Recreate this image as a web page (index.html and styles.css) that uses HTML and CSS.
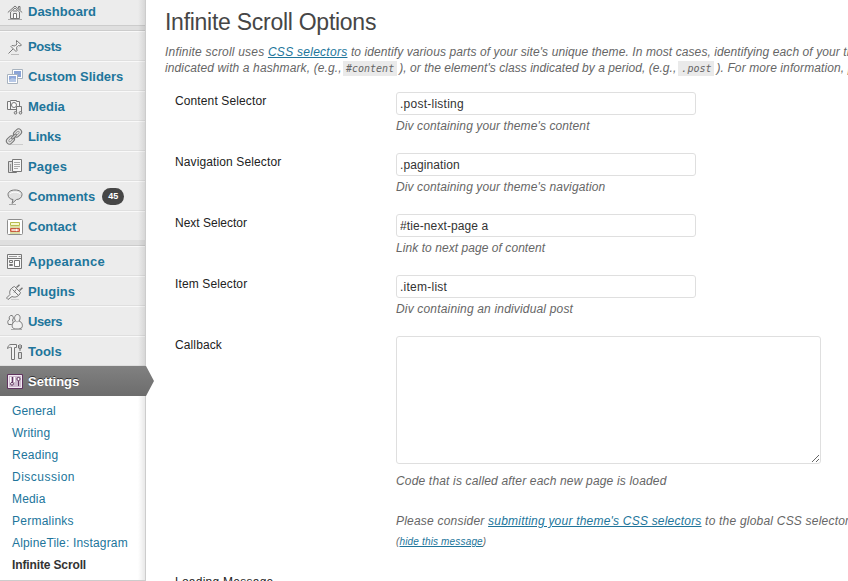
FILE: index.html
```html
<!DOCTYPE html>
<html lang="en">
<head>
<meta charset="utf-8">
<title>Infinite Scroll Options</title>
<link rel="stylesheet" href="styles.css">
</head>
<body>
<div class="admin">
  <nav class="sidebar">
    <a class="item first"><svg class="icon" viewBox="0 0 16 16"><path d="M3.500 8v6.500h9V8L8 4z" fill="#eee"/><path d="M.800 8.500 8 2l7.200 6.500M11.500 4.500v-2h1.500v3.500" fill="none"/><path d="M6.500 14V9.500h3V14" fill="#fff"/><path d="M1 15.500h14" stroke="#aaa"/><path d="M6 7h4" /></svg><span>Dashboard</span></a>
    <div class="sep"></div>
    <a class="item"><svg class="icon" viewBox="0 0 16 16"><path d="M6 10l-4.500 4.500"/><path d="M9.500 1.500l5 4.500-1.500 1-1.500-.500-2 2 .500 3-1 1L4 7.500l1-1 3 .500 2-2-.500-1.500z" fill="#f4f4f4"/><path d="M8 5.500l3 3M4 15.500h8" stroke="#bbb"/></svg><span class="tight">Posts</span></a>
    <a class="item"><svg class="icon" viewBox="0 0 16 16"><path d="M5.500.500h10v9h-10z" fill="#fff" stroke="#a8b3bf"/><path d="M7 2h7v6H7z" fill="#8ba4d6" stroke="none"/><path d="M.500 5.500h10v9H.500z" fill="#fff" stroke="#a8b3bf"/><path d="M2 7h7v6H2z" fill="#91a9da" stroke="none"/><path d="M2 11l3-2 4 1v3H2z" fill="#b7c8e6" stroke="none"/></svg><span>Custom Sliders</span></a>
    <a class="item"><svg class="icon" viewBox="0 0 16 16"><path d="M.500 2.500h3v-1h6v1h3v8H.500z" fill="#f5f5f5"/><circle cx="7" cy="6" r="2.500" fill="#fff"/><path d="M3.500 3v7"/><path d="M9.500 14V7.500h5V14" fill="#eee"/><circle cx="8.500" cy="13.800" r="1.300" fill="#ddd"/><circle cx="13.500" cy="13.800" r="1.300" fill="#ddd"/></svg><span>Media</span></a>
    <a class="item"><svg class="icon" viewBox="0 0 16 16"><path d="M3 15.500h13" stroke="#ccc"/><g transform="translate(-1 -.500) rotate(-45 8 8)"><rect x="-1.500" y="5" width="9" height="6" rx="3" fill="#e8e8e8"/><rect x="8.500" y="5" width="9" height="6" rx="3" fill="#e8e8e8"/><rect x="1" y="7" width="4" height="2" rx="1" fill="#fff" stroke="#999"/><rect x="11" y="7" width="4" height="2" rx="1" fill="#fff" stroke="#999"/><rect x="5" y="7" width="6" height="2" rx="1" fill="#ddd"/></g></svg><span class="tight-s">Links</span></a>
    <a class="item"><svg class="icon" viewBox="0 0 16 16"><path d="M5.500 2.500h-4v11h8v-1" fill="#ddd"/><path d="M5.500.500h9v12h-9z" fill="#f7f7f7"/><path d="M7 3.500h6M7 5.500h6M7 7.500h6M7 9.500h4" stroke="#aaa"/><path d="M3.500 5v7" stroke="#999"/></svg><span class="wide-s">Pages</span></a>
    <a class="item"><svg class="icon" viewBox="0 0 16 16"><path d="M8 1c4.500 0 7 2 7 4.500s-2 5-5.500 5L5 14.500l1-4C3 10.500 1 8 1 5.500S3.500 1 8 1z" fill="#e0e0e0"/><path d="M3 5c1-2.500 9-2.500 10 0" stroke="#fff"/><path d="M2 15.500h7" stroke="#aaa"/></svg><span>Comments</span><b class="badge">45</b></a>
    <a class="item"><svg class="icon" viewBox="0 0 16 16"><rect x=".500" y=".500" width="15" height="15" rx="1" fill="#fff" stroke="#8e8e8e"/><path d="M3.500 3.500h9v3h-9z" fill="#f7f8cf" stroke="#b8bc4e"/><path d="M3.500 9.500h9v3h-9z" fill="#f0a088" stroke="#c65d40"/><path d="M3 8h10M3 14h10" stroke="#b8bc4e"/><path d="M5 11h5M9 10l1.500 1L9 12" stroke="#fff"/></svg><span>Contact</span></a>
    <div class="sep"></div>
    <a class="item"><svg class="icon" viewBox="0 0 16 16"><path d="M.500.500h14v14H.500z" fill="#f6f6f6"/><path d="M2 2.500h8M11.500 2.500h2" stroke="#999"/><path d="M1 4.500h13" /><path d="M7.500 6.500h5v6h-5z" fill="#fff"/><path d="M2.500 6.500h3v2h-3zM2.500 10.500h3v1h-3z"/></svg><span class="wide-m">Appearance</span></a>
    <a class="item"><svg class="icon" viewBox="0 0 16 16"><path d="M4 15.500h8" stroke="#ccc"/><path d="M9.500 3.500L12.500.800M12.500 6.500l3-2.700" stroke-width="1.500"/><path d="M7.500 2.500l6 6c-1.500 4-5.500 5.500-8.500 4L1 15.500l-1.500-1.500L3 10.500C2 7.500 3.500 4 7.500 2.500z" fill="#f2f2f2"/><path d="M5.500 5.500l5.500 5.500M7 8.500l2-3"/></svg><span>Plugins</span></a>
    <a class="item"><svg class="icon" viewBox="0 0 16 16"><path d="M1.500 10.500C0 8 1 6 2.500 5.500 1.500 3 3 1 5 1.500 7 2.500 6.500 5 5.500 6c1 2 .500 4-1 4.500z" fill="#f1f1f1"/><path d="M8.500 7C6.500 4 8 .500 10.500.500S14 4 12 7c3 1 4 4 3 6.500-2 2-8 2-9.500 0C4.500 10.500 6 8 8.500 7z" fill="#f1f1f1"/><path d="M8.500 7c1 1 2.500 1 3.500 0M4 15.500h11" stroke="#aaa"/></svg><span class="tight">Users</span></a>
    <a class="item"><svg class="icon" viewBox="0 0 16 16"><path d="M.500 4.500C1 2 2 .500 4 .500h5.500v3H7.500v12h-3v-12C3 3 2 3.500.500 4.500z" fill="#f3f3f3"/><path d="M13 0v7M11.500 1v3c0 1 3 1 3 0V1"/><path d="M11.500 8.500h3v6h-3z" fill="#ddd"/></svg><span>Tools</span></a>
    <a class="item current"><svg class="icon" viewBox="0 0 16 16"><path d="M.500.500h15v14H.500z" fill="#cdbace" stroke="#60355f"/><path d="M1.500 1.500h13v12h-13z" stroke="#f3e9f3"/><path d="M5.500 3v5M11.500 7v5" stroke="#60355f"/><path d="M3.500 3v6M7.500 3v5" stroke="#fff"/><circle cx="5" cy="9.800" r="1.400" fill="#fff" stroke="#60355f"/><circle cx="11.500" cy="5" r="1.600" fill="#fff" stroke="#60355f"/></svg><span>Settings</span><i class="arrow"></i></a>
    <div class="submenu">
      <a class="wide-s">General</a>
      <a class="wide-s">Writing</a>
      <a class="wide-m">Reading</a>
      <a class="wide-l">Discussion</a>
      <a class="wide-s">Media</a>
      <a class="wide-m">Permalinks</a>
      <a class="wide-s">AlpineTile: Instagram</a>
      <a class="active">Infinite Scroll</a>
    </div>
  </nav>
  <main class="content">
    <h1>Infinite Scroll Options</h1>
    <div class="intro">
      <div class="line1">Infinite scroll uses <a>CSS selectors</a><span class="rest"> to identify various parts of your site's unique theme. In most cases, identifying each of your th</span></div>
      <div class="line2"><span class="before">indicated with a hashmark, (e.g.,</span><code>#content</code><span class="between">), or the element's class indicated by a period, (e.g.,</span><code>.post</code><span class="after">). For more information, p</span></div>
    </div>
    <form class="fields">
      <div class="row"><label>Content Selector</label><div><input class="wide-m" type="text" value=".post-listing"><p>Div containing your theme's content</p></div></div>
      <div class="row"><label>Navigation Selector</label><div><input type="text" value=".pagination"><p>Div containing your theme's navigation</p></div></div>
      <div class="row"><label class="plain">Next Selector</label><div><input type="text" value="#tie-next-page a"><p class="link-note">Link to next page of content</p></div></div>
      <div class="row"><label>Item Selector</label><div><input class="wide-m" type="text" value=".item-list"><p class="item-note">Div containing an individual post</p></div></div>
      <div class="row tall"><label>Callback</label><div><textarea></textarea><p class="code-note">Code that is called after each new page is loaded</p><p class="consider">Please consider <a>submitting your theme's CSS selectors</a> to the global CSS selector</p><p class="hide">(<a>hide this message</a>)</p></div></div>
      <div class="row"><label class="wide-m">Loading Message</label></div>
    </form>
  </main>
</div>
</body>
</html>
```
FILE: styles.css
```css
* { box-sizing: border-box; }
body { margin: 0; background: #fff; font: 12px/16px "Liberation Sans", Arial, sans-serif; color: #333; overflow: hidden; }
.admin { display: flex; height: 581px; overflow: hidden; }
.sidebar { position: relative; flex: 0 0 146px; width: 146px; height: 581px; border-right: 1px solid #ccc; border-bottom: 1px solid #ccc; background: #ececec; }
.sidebar::after { content: ""; position: absolute; top: 0; right: 0; bottom: 0; width: 7px; background: linear-gradient(to right, rgba(0,0,0,0), rgba(0,0,0,.09)); }
.item { display: flex; align-items: center; height: 30px; padding: 2px 0 0 7px; border-top: 1px solid #f9f9f9; border-bottom: 1px solid #dfdfdf; color: #21759b; font-size: 13px; font-weight: bold; white-space: nowrap; }
.item.first { height: 26px; padding: 0 0 2px 7px; border-top: 0; border-bottom-color: #ccc; }
.icon { flex: none; width: 16px; height: 16px; margin-right: 5px; fill: none; stroke: #777; stroke-width: 1; overflow: visible; }
.sep { height: 5px; background: #dfdfdf; border-bottom: 1px solid #ccc; }
.badge { margin: -2px 0 0 7px; width: 22px; height: 17px; border-radius: 9px; background: #464646; color: #fff; font-size: 9px; line-height: 17px; text-align: center; }
.current { position: relative; z-index: 2; width: 146px; color: #fff; background: linear-gradient(#808080, #6d6d6d); border-color: #808080 transparent #6d6d6d; text-shadow: 0 -1px 0 #333; }
.arrow { position: absolute; left: 146px; top: -1px; width: 8px; height: 30px; background: linear-gradient(#808080, #6d6d6d); clip-path: polygon(0 0, 100% 50%, 0 100%); }
.submenu { display: flex; flex-direction: column; height: 184px; padding: 4px 0 0 12px; background: #fff; }
.submenu a { height: 22px; line-height: 22px; color: #21759b; white-space: nowrap; }
.submenu .active { color: #333; font-weight: bold; letter-spacing: -.13px; }
.tight { letter-spacing: -.4px; }
.tight-s { letter-spacing: -.15px; }
.wide-s { letter-spacing: .17px; }
.wide-m { letter-spacing: .25px; }
.wide-l { letter-spacing: .5px; }
.content { flex: none; width: 702px; padding-left: 19px; overflow: hidden; }
h1 { margin: 0; height: 43px; padding-top: 8px; font-size: 23px; line-height: 29px; font-weight: normal; color: #464646; letter-spacing: -.27px; }
.intro { height: 49px; font-style: italic; color: #666; white-space: nowrap; }
.line1, .line2 { height: 17px; }
.line1 { line-height: 18px; letter-spacing: .2px; }
.line1 a { letter-spacing: .27px; }
.rest { letter-spacing: .09px; }
.line2 { display: flex; line-height: 16px; }
.before { width: 176px; letter-spacing: .12px; }
.between { width: 278px; letter-spacing: .05px; }
.after { letter-spacing: .1px; }
a { color: #21759b; }
.content a { text-decoration: underline; }
code { height: 15px; margin: 1px 2px 0; padding: 0 3px; background: #eaeaea; font: italic 10px/15px "DejaVu Sans Mono", monospace; }
.row { display: grid; grid-template-columns: 221px 1fr; height: 61px; padding-left: 10px; }
.row.tall { height: 237px; }
label { color: #222; line-height: 18px; letter-spacing: .12px; }
label.plain { letter-spacing: 0; }
label.wide-m { letter-spacing: .25px; }
input { display: block; width: 300px; height: 23px; margin: 0; padding: 0 3px; border: 1px solid #dfdfdf; border-radius: 3px; background: #fff; font: 12px "Liberation Sans", Arial, sans-serif; color: #333; letter-spacing: .1px; }
input.wide-m { letter-spacing: .25px; }
textarea { display: block; width: 425px; height: 128px; margin: 0; border: 1px solid #dfdfdf; border-radius: 3px; resize: both; }
p { margin: 3px 0 0; font-size: 12px; line-height: 16px; font-style: italic; color: #666; white-space: nowrap; letter-spacing: .11px; }
.link-note { letter-spacing: .06px; }
.item-note { letter-spacing: .17px; }
.code-note { margin-top: 9px; letter-spacing: .17px; }
.consider { margin-top: 24px; letter-spacing: .21px; }
.hide { margin-top: 5px; font-size: 10px; letter-spacing: .16px; }
```
